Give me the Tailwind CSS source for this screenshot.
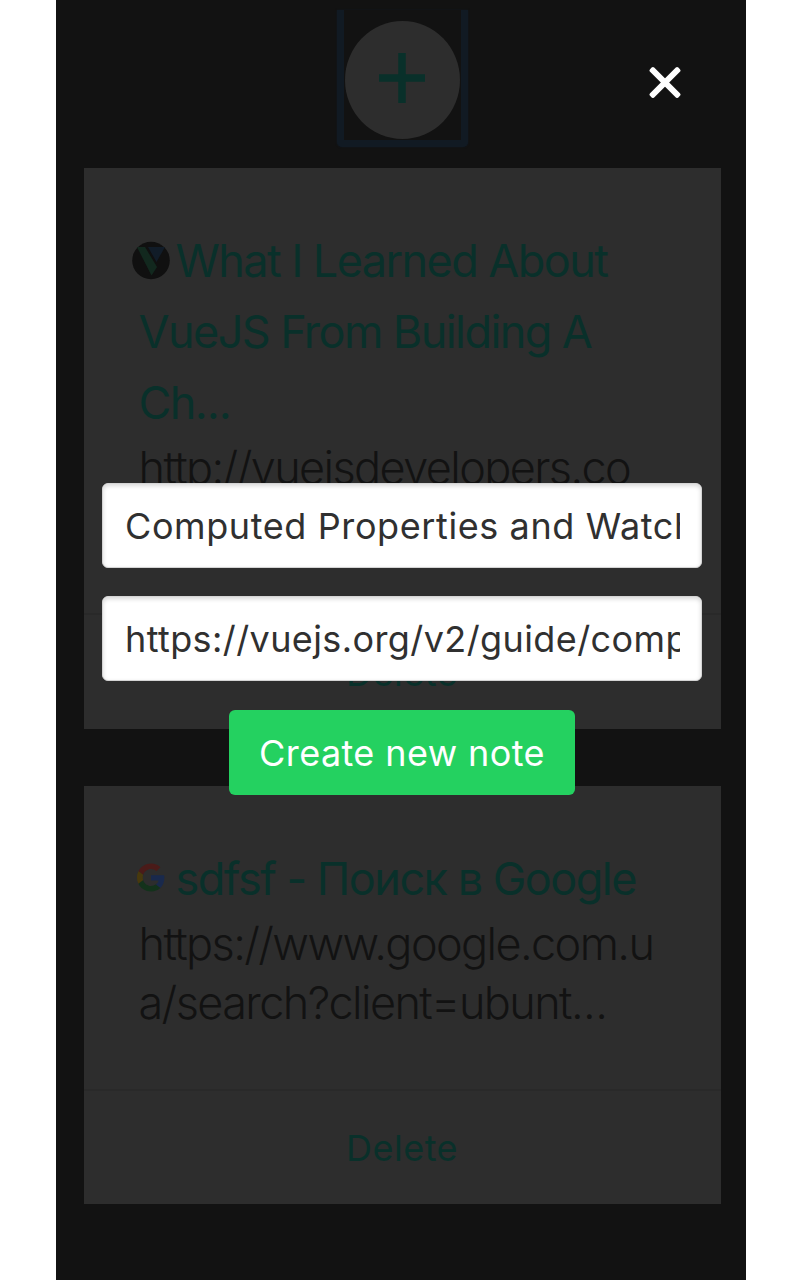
<!DOCTYPE html>
<html lang="en">
<head>
<meta charset="utf-8">
<title>Notes</title>
<script src="https://cdn.jsdelivr.net/npm/@tailwindcss/browser@4"></script>
</head>
<body class="bg-white font-['Inter','Noto_Sans',sans-serif]">
<div class="relative mx-[56px] h-[1280px] w-[690px] overflow-hidden bg-[#121212]">
  <header class="flex h-[168px] justify-center pl-[3px] pt-[10px]">
    <div class="mr-[1px] flex h-[137px] w-[131px] justify-center rounded-b-[5px] border-x-[7px] border-b-[7px] border-[#111a23] pt-[11px] shadow-[0_0_2px_#111a23]">
      <svg class="h-[118px] w-[116px] shrink-0" viewBox="0 0 116 118"><ellipse cx="58.500" cy="59" rx="57.500" ry="59" fill="#2d2d2d"/><path d="M58 32v50M35 57h46" stroke="#09302a" stroke-width="7.500"/></svg>
    </div>
  </header>
  <main class="ml-[27.500px] flex w-[637px] flex-col gap-[57px]">
    <article class="flex h-[560.500px] flex-col bg-[#2d2d2d]">
      <div class="h-[445px] shrink-0 px-[55px] pt-[57px]">
        <h2 class="relative whitespace-nowrap text-[45px] leading-[71px] tracking-[-1.570px] text-[#09302a]">
          <svg class="absolute -left-[7px] top-[16px] h-[39px] w-[38px]" viewBox="0 0 38 39"><circle cx="19" cy="19.500" r="18.800" fill="#101010"/><path d="M5 6h8l12 20-5.500 8.500z" fill="#12281e"/><path d="M16 6h17l-8.500 15z" fill="#111c28"/></svg>
          <span class="ml-[37px]">What I Learned About</span><br>VueJS From Building A<br>Ch<span class="tracking-[-1px]">...</span>
        </h2>
        <p class="whitespace-nowrap text-[45px] font-light leading-[59px] tracking-[-1.600px] text-[#121212]">http://vuejsdevelopers.co</p>
      </div>
      <footer class="flex grow items-center justify-center border-t-2 border-[#292929] pt-[2px] text-[36px] tracking-[0.500px] text-[#09302a]">Delete</footer>
    </article>
    <article class="flex h-[418.500px] flex-col bg-[#2d2d2d]">
      <div class="h-[303px] shrink-0 px-[55px] pt-[57px]">
        <h2 class="relative whitespace-nowrap text-[45px] leading-[71px] tracking-[-1.500px] text-[#09302a]">
          <svg class="absolute -left-[2px] top-[20px] h-[29px] w-[28px]" viewBox="0 0 48 48"><path fill="#4a1b19" d="M24 9.500c3.540 0 6.710 1.220 9.210 3.600l6.850-6.850C35.900 2.380 30.470 0 24 0 14.620 0 6.510 5.380 2.560 13.220l7.980 6.190C12.430 13.720 17.740 9.500 24 9.500z"/><path fill="#19294c" d="M46.980 24.550c0-1.570-.15-3.090-.38-4.550H24v9.020h12.940c-.58 2.960-2.260 5.480-4.780 7.180l7.730 6c4.510-4.180 7.090-10.360 7.090-17.650z"/><path fill="#48390d" d="M10.530 28.590c-.48-1.450-.76-2.990-.76-4.590s.27-3.140.76-4.590l-7.980-6.190C.92 16.460 0 20.120 0 24c0 3.880.92 7.540 2.560 10.780l7.970-6.190z"/><path fill="#13321b" d="M24 48c6.480 0 11.930-2.130 15.890-5.810l-7.730-6c-2.150 1.450-4.920 2.300-8.160 2.300-6.260 0-11.570-4.220-13.470-9.910l-7.980 6.190C6.510 42.620 14.620 48 24 48z"/></svg>
          <span class="ml-[37px]">sdfsf - Поиск в Google</span>
        </h2>
        <p class="whitespace-nowrap text-[45px] font-light leading-[59px] tracking-[-1.600px] text-[#121212]">https://www.google.com.u<br>a/search?client=ubunt<span class="tracking-[-0.500px]">...</span></p>
      </div>
      <footer class="flex grow items-center justify-center border-t-2 border-[#292929] pt-[2px] text-[36px] tracking-[0.500px] text-[#09302a]">Delete</footer>
    </article>
  </main>
  <div class="absolute inset-0 flex flex-col items-center gap-[28.300px] pt-[483px] pl-[2px] text-[36px] text-[#303030]">
    <svg class="absolute left-[593px] top-[66px] size-[32px]" viewBox="0 0 32 32" fill="#fff"><g transform="translate(16 16.500) rotate(45)"><rect x="-20" y="-2.900" width="40" height="5.800" rx="1.800"/><rect x="-2.900" y="-20" width="5.800" height="40" rx="1.800"/></g></svg>
    <div class="h-[85px] w-[600px] rounded-[6px] border border-[#d4d4d4] bg-white pl-[22px] pr-[21px] pt-[1px] shadow-[inset_0_2px_4px_#d8d8d8]"><div class="overflow-hidden whitespace-nowrap leading-[82px] tracking-[0.600px]">Computed Properties and Watchers</div></div>
    <div class="h-[85px] w-[600px] rounded-[6px] border border-[#d4d4d4] bg-white pl-[22px] pr-[21px] pt-[1px] shadow-[inset_0_2px_4px_#d8d8d8]"><div class="overflow-hidden whitespace-nowrap leading-[82px] tracking-[0.400px]">https://vuejs.org/v2/guide/computed.html</div></div>
    <button class="h-[85px] w-[346px] rounded-[6px] bg-[#24d160] pt-[1px] tracking-[0.400px] text-white">Create new note</button>
  </div>
</div>
</body>
</html>
